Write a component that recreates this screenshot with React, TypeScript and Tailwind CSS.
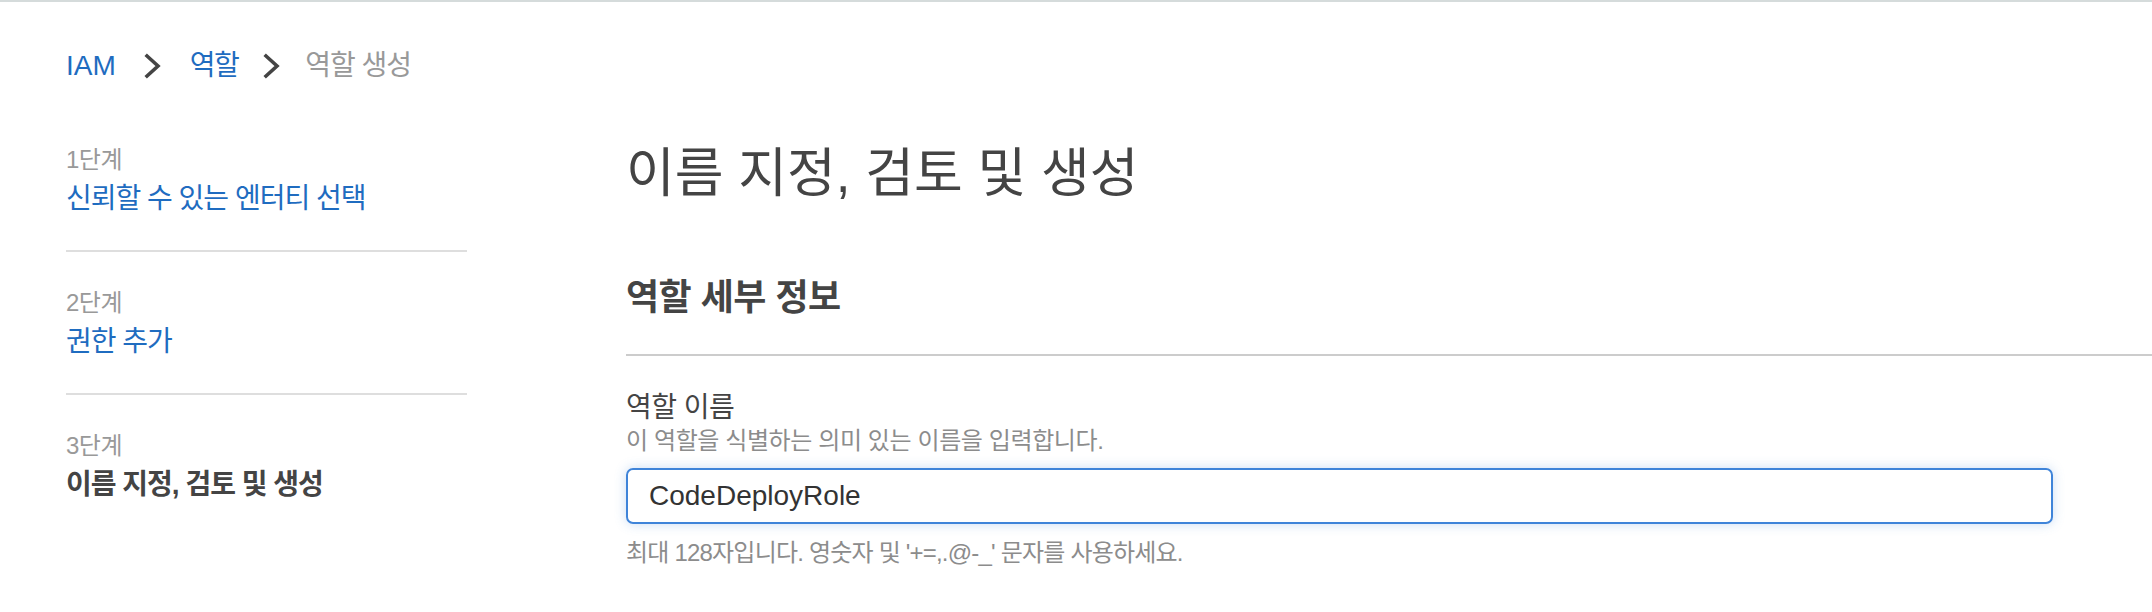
import React from "react";

const FONT = '"Liberation Sans", "Noto Sans CJK KR", sans-serif';

function Chevron() {
  return (
    <svg width="18" height="26" viewBox="0 0 18 26" className="shrink-0">
      <polyline points="3,3 14,13 3,23" fill="none" stroke="#444" strokeWidth="3.6" strokeLinecap="square" strokeLinejoin="miter" />
    </svg>
  );
}

function Step({ label, title, active, last }: { label: string; title: string; active?: boolean; last?: boolean }) {
  return (
    <div className={last ? "pt-[35px]" : "pb-[31px] border-b-2 border-[#dedede]"}>
      <div className="text-[24px] leading-[32px] tracking-[-0.5px] text-[#999999]">{label}</div>
      <div
        className={
          active
            ? "mt-[3px] text-[28px] leading-[40px] tracking-[-1px] font-bold text-[#444444]"
            : "mt-[3px] text-[28px] leading-[40px] tracking-[-1px] text-[#1f6cc0]"
        }
      >
        {title}
      </div>
    </div>
  );
}

export default function App() {
  return (
    <div className="min-h-[612px] bg-white border-t-2 border-[#d5dbdb]" style={{ fontFamily: FONT }}>
      <nav className="pl-[66px] pt-[44px] flex items-center h-[84px] text-[28px] leading-[40px]">
        <span className="text-[#1f6cc0]">IAM</span>
        <span className="ml-[28px] mr-[28px] flex items-center"><Chevron /></span>
        <span className="text-[#1f6cc0] tracking-[-1.5px]">역할</span>
        <span className="ml-[25px] mr-[24px] flex items-center"><Chevron /></span>
        <span className="text-[#999999] tracking-[-1px]">역할 생성</span>
      </nav>
      <div className="flex mt-[58px]">
        <aside className="ml-[66px] w-[401px] shrink-0 flex flex-col">
          <Step label="1단계" title="신뢰할 수 있는 엔터티 선택" />
          <div className="pt-[35px]">
            <Step label="2단계" title="권한 추가" />
          </div>
          <Step label="3단계" title="이름 지정, 검토 및 생성" active last />
        </aside>
        <main className="ml-[159px] flex-1 min-w-0">
          <h1 className="text-[53px] leading-[60px] font-normal text-[#444444]">이름 지정, 검토 및 생성</h1>
          <h2 className="mt-[72px] text-[36px] leading-[44px] font-bold tracking-[-0.5px] text-[#444444]">역할 세부 정보</h2>
          <div className="mt-[34px] border-t-2 border-[#cccccc]" />
          <div className="mt-[34px] text-[28px] leading-[36px] tracking-[-0.5px] text-[#444444]">역할 이름</div>
          <div className="-mt-[1px] text-[24px] leading-[32px] tracking-[-0.4px] text-[#8c8c8c]">이 역할을 식별하는 의미 있는 이름을 입력합니다.</div>
          <div className="mt-[11px] w-[1427px] h-[56px] rounded-[7px] border-2 border-[#3f84d9] shadow-[0_0_12px_rgba(63,132,217,0.28)] flex items-center pl-[21px] text-[28px] text-[#333333]">
            CodeDeployRole
          </div>
          <div className="mt-[13px] text-[24px] leading-[32px] tracking-[-0.8px] text-[#8c8c8c]">최대 128자입니다. 영숫자 및 '+=,.@-_' 문자를 사용하세요.</div>
        </main>
      </div>
    </div>
  );
}
